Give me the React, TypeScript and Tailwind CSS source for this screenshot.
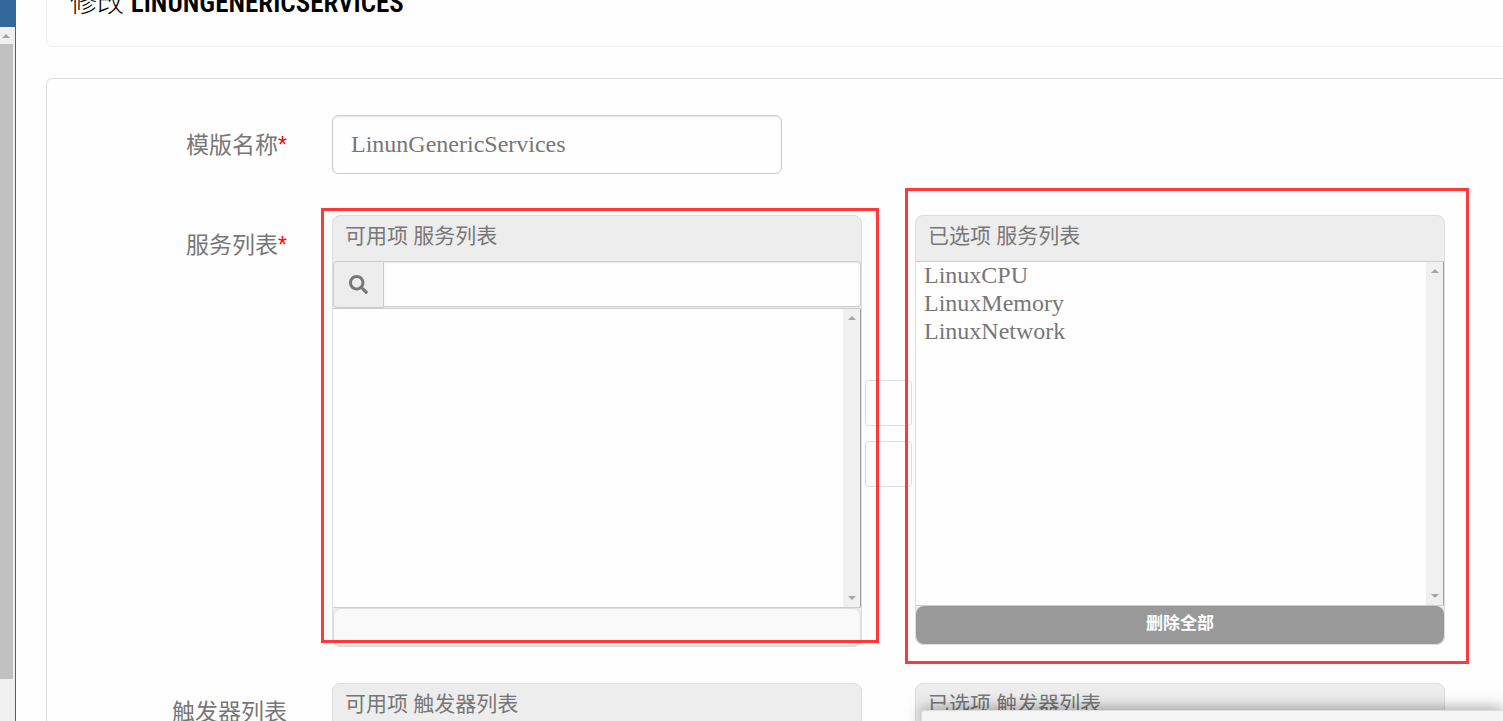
import { useState } from 'react'
import type { ReactNode } from 'react'
import { FaSearch } from 'react-icons/fa'

function Triangle({ down }: { down?: boolean }) {
  return (
    <svg viewBox="0 0 8 4" className={`w-2 h-1 shrink-0 ${down ? 'rotate-180' : ''}`} aria-hidden="true">
      <path d="M0 4 4 0l4 4z" fill="#a3a3a3" />
    </svg>
  )
}

function ScrollTrack() {
  return (
    <div className="w-[18px] shrink-0 bg-[#f0f0f0] border-r border-[#a0a0a0] flex flex-col items-center justify-between py-[7px]">
      <Triangle />
      <Triangle down />
    </div>
  )
}

function Row({ id, label, required, children }: { id: string; label: string; required?: boolean; children: ReactNode }) {
  return (
    <div className="flex gap-[45px]">
      <label htmlFor={id} className="w-[240px] shrink-0 pt-[14px] text-right text-[23px] leading-8">
        {label}
        {required && <span className="text-[#ff0000] font-['Liberation_Sans',sans-serif]">*</span>}
      </label>
      {children}
    </div>
  )
}

function ListBox({ id, label, items, height }: { id: string; label: string; items: string[]; height: string }) {
  return (
    <div className={`flex border-y border-[#ccc] bg-[#fefefe] ${height}`}>
      <select
        id={id}
        multiple
        aria-label={label}
        className="flex-1 min-w-0 appearance-none overflow-hidden outline-none px-[6px] text-2xl"
      >
        {items.map(item => (
          <option key={item} value={item} className="-mb-px px-[2px] py-0">{item}</option>
        ))}
      </select>
      <ScrollTrack />
    </div>
  )
}

function Panel({ title, children, mark }: { title: string; children?: ReactNode; mark?: ReactNode }) {
  return (
    <div className="relative flex-1 min-w-0">
      <div className="rounded-lg border border-[#ddd] bg-[#ededed] min-h-[60px]">
        <h2 className="h-[45px] pl-3 pt-1 text-[21px] leading-8">{title}</h2>
        {children}
      </div>
      {mark}
    </div>
  )
}

function MoveButtons() {
  return (
    <div className="w-[53px] shrink-0 px-[3px] pt-[165px] flex flex-col gap-[15px]">
      <button aria-label="添加" className="h-[46px] rounded border border-[#ddd] bg-[#fefefe]" />
      <button aria-label="移除" className="h-[46px] rounded border border-[#ddd] bg-[#fefefe]" />
    </div>
  )
}

export default function App() {
  const [name, setName] = useState('LinunGenericServices')
  const [query, setQuery] = useState('')
  const [services, setServices] = useState(['LinuxCPU', 'LinuxMemory', 'LinuxNetwork'])

  return (
    <div className="h-screen overflow-hidden flex bg-[#fefefe] text-[#777] font-['Liberation_Serif','Noto_Sans_CJK_SC',serif]">
      {/* Side scrollbar */}
      <aside className="w-4 shrink-0 flex flex-col bg-[#f0f0f0] border-r border-[#336699]">
        <div className="h-[27px] bg-[#336699]" />
        <div className="h-[17px] pl-[2px] flex items-center">
          <Triangle />
        </div>
        <div className="h-[635px] w-[13px] bg-[#c1c1c1]" />
      </aside>

      <main className="flex-1 min-w-0 pl-[30px]">
        <header className="-mt-6 -mr-2 pt-[6px] pb-[26px] pl-[23px] rounded-md border border-[#eee]">
          <h1 className="h-[37px] text-[27px] leading-9 text-black whitespace-nowrap">
            <span className="font-['Noto_Sans_CJK_SC',sans-serif] font-light">修改</span>{' '}
            <span className="font-['Roboto_Condensed','Liberation_Sans_Narrow',sans-serif] font-semibold">LINUNGENERICSERVICES</span>
          </h1>
        </header>

        <form
          className="mt-[31px] -mr-2 pt-9 pr-[65px] rounded-md border border-[#ddd]"
          onSubmit={e => e.preventDefault()}
        >
          <Row id="name" label="模版名称" required>
            <input
              id="name"
              value={name}
              onChange={e => setName(e.target.value)}
              className="w-[450px] h-[59px] mb-[41px] px-[18px] text-2xl rounded-md border border-[#ccc] bg-[#fefefe] shadow-[inset_0_1px_2px_rgba(0,0,0,0.1)] outline-none"
            />
          </Row>

          <Row id="services" label="服务列表" required>
            <div className="flex flex-1 min-w-0 items-start mb-9">
              <Panel
                title="可用项 服务列表"
                mark={<div className="absolute z-10 pointer-events-none -left-[11px] -right-[17px] -top-[7px] bottom-1 border-3 border-[#ff3838]" />}
              >
                <div className="flex h-[47px]">
                  <label htmlFor="search" aria-label="搜索" className="w-[51px] flex items-center justify-center rounded-l border border-[#ccc]">
                    <FaSearch className="size-[19px]" />
                  </label>
                  <input
                    id="search"
                    value={query}
                    onChange={e => setQuery(e.target.value)}
                    className="flex-1 min-w-0 h-[46px] px-3 text-2xl rounded-r border border-l-0 border-[#ccc] bg-[#fefefe] shadow-[inset_0_1px_2px_rgba(0,0,0,0.1)] outline-none"
                  />
                </div>
                <ListBox id="available" label="可用项 服务列表" items={[]} height="h-[300px]" />
                <button aria-label="选择全部" className="block w-full h-[38px] rounded-lg border border-[#ddd] bg-[#f9f9f9]" />
              </Panel>
              <MoveButtons />
              <Panel
                title="已选项 服务列表"
                mark={<div className="absolute z-10 pointer-events-none -left-[10px] -right-6 -top-[27px] -bottom-[19px] border-3 border-[#ff3838]" />}
              >
                <ListBox id="services" label="已选项 服务列表" items={services} height="h-[345px]" />
                <button
                  onClick={() => setServices([])}
                  className="block w-full h-[38px] pb-[6px] rounded-lg bg-[#999] text-white text-[17px] font-bold font-['Noto_Sans_CJK_SC',sans-serif]"
                >
                  删除全部
                </button>
              </Panel>
            </div>
          </Row>

          <Row id="triggers" label="触发器列表">
            <div id="triggers" className="flex flex-1 min-w-0 items-start">
              <Panel title="可用项 触发器列表" />
              <div className="w-[53px] shrink-0" />
              <Panel title="已选项 触发器列表" />
            </div>
          </Row>
        </form>
      </main>

      {/* Edge of the window docked at the bottom */}
      <div className="fixed z-20 bottom-0 right-0 left-[921px] h-[11px] rounded-tl border-t border-l border-[#ddd] bg-[#f5f5f5] shadow-[0_0_16px_rgba(0,0,0,0.5)]" />
    </div>
  )
}
